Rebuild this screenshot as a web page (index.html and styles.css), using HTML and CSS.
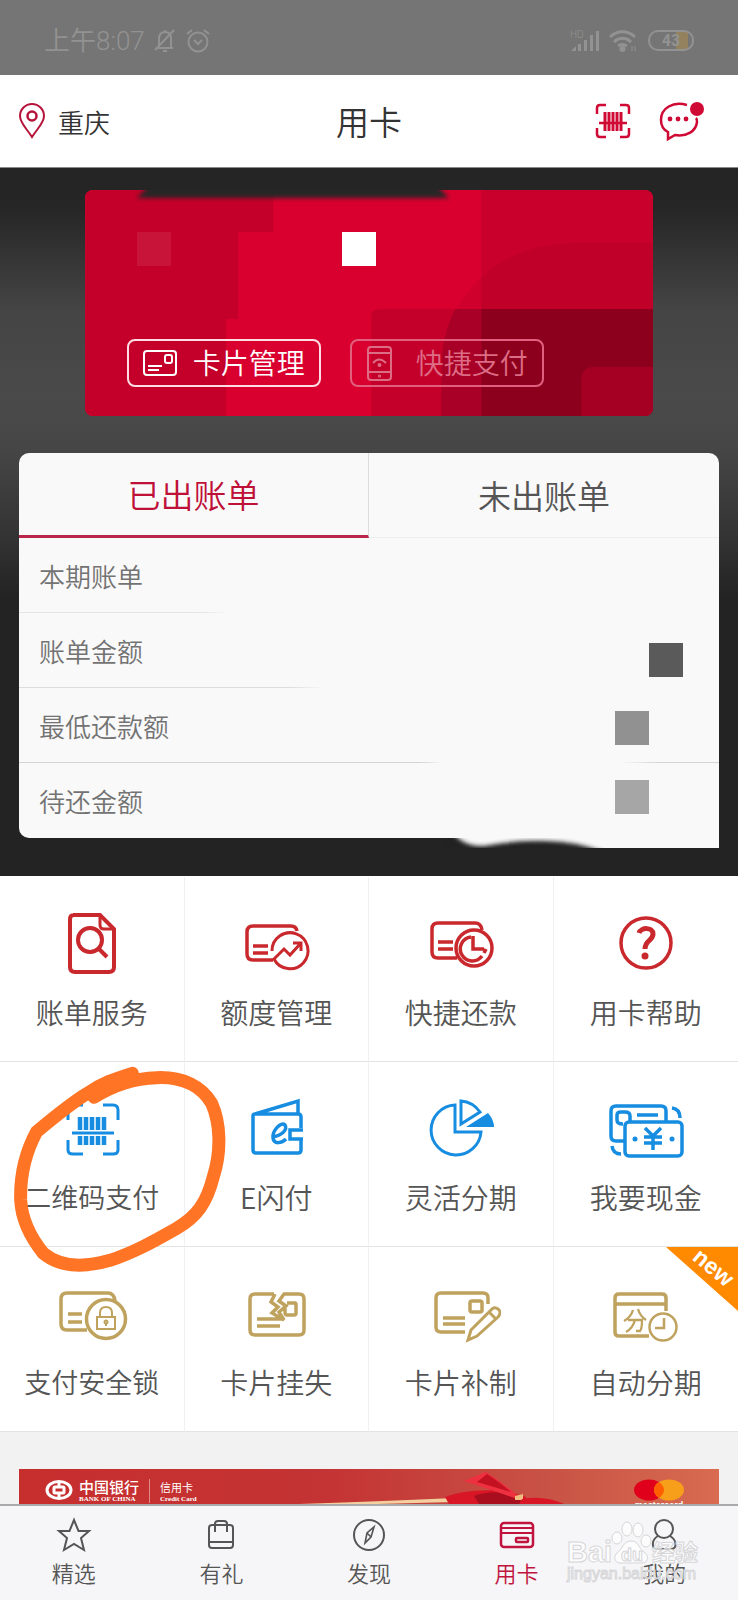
FILE: index.html
```html
<!DOCTYPE html>
<html lang="zh-CN">
<head>
<meta charset="utf-8">
<meta name="viewport" content="width=device-width, initial-scale=1">
<title>用卡</title>
<link rel="stylesheet" href="styles.css">
</head>
<body>
<div class="page">
  <div class="status">
    <span class="status-time">上午8:07</span>
    <svg class="ic" width="24" height="26" viewBox="0 0 24 26" stroke-width="2"><path d="M4 20H20M6 20V11C6 7 8 4 12 4S18 7 18 11V20M12 2V4M10 23H14M21 2 2 22"/></svg>
    <svg class="ic" width="26" height="26" viewBox="0 0 26 26" stroke-width="2"><circle cx="13" cy="14" r="9.5"/><path d="M9 12 13 16 17 12M2 6 7 2M24 6 19 2"/></svg>
    <span class="status-gap"></span>
    <svg class="signal" width="30" height="24" viewBox="0 0 30 24"><text class="hd" x="0" y="9">HD</text><path fill="currentColor" d="M1 22 6 17V22ZM8 15H11V22H8ZM14 11H17V22H14ZM20 6H23V22H20ZM26 2H29V22H26Z"/></svg>
    <svg class="ic wifi" width="30" height="24" viewBox="0 0 30 24" stroke-width="3"><path d="M2 8C9 1 20 1 27 8M6 13C11 8 18 8 23 13M10 17C13 15 16 15 19 17"/><circle cx="14.500" cy="20" r="1.500"/><path stroke-width="1" d="M24 17V22M27 17V22"/></svg>
    <span class="battery">43</span>
  </div>

  <header class="header">
    <button class="city" type="button">
      <svg class="ic" width="28" height="36" viewBox="0 0 28 36" stroke-width="2"><path d="M14 34C9 26 2 20 2 13A12 12 0 0 1 26 13C26 20 19 26 14 34Z"/><circle cx="14" cy="13" r="4.500" stroke-width="2.500"/></svg>
      <span>重庆</span>
    </button>
    <h1>用卡</h1>
    <div class="header-actions">
      <button type="button" aria-label="扫码">
        <svg class="ic" width="36" height="36" viewBox="0 0 36 36" stroke-width="2.500"><path d="M2 11V5Q2 2 5 2H11M25 2H31Q34 2 34 5V11M34 25V31Q34 34 31 34H25M11 34H5Q2 34 2 31V25M4 20H32"/><path d="M10 9V28M14 9V28M18 9V28M22 9V28M26 9V28" stroke-width="3"/></svg>
      </button>
      <button type="button" aria-label="消息">
        <svg class="ic" width="46" height="42" viewBox="0 0 46 42" stroke-width="2.500"><path d="M28 5C14 1 2 8 2 20C2 26 5 30 9 32V39L16 35C28 37 37 31 38 22C38 20 38 19 37 18"/><circle cx="38" cy="9" r="7" fill="currentColor" stroke="none"/><g fill="currentColor" stroke="none"><circle cx="11" cy="19" r="2.400"/><circle cx="19" cy="19" r="2.400"/><circle cx="27" cy="19" r="2.400"/></g></svg>
      </button>
    </div>
  </header>

  <main>
    <section class="account">
      <div class="card">
        <svg class="card-art" viewBox="0 0 568 226" preserveAspectRatio="none">
          <rect width="568" height="226" fill="#d9002f"/>
          <path fill="#c4002a" d="M0 0H188V42H153V129H141V226H0Z"/>
          <rect x="396" width="172" height="226" fill="#c9002c"/>
          <path fill="#8c001d" fill-opacity=".13" d="M356 226V180C358 108 410 53 490 53H568V226Z"/>
          <path fill="#c4002a" d="M286 226V127Q286 119 294 119H370Q356 145 356 180V226Z"/>
          <path fill="#a80026" d="M356 226V180Q356 145 370 119H396V226Z"/>
          <path fill="#8c001d" d="M396 119H568V226H396Z"/>
          <path fill="#a50024" d="M496 226V190Q496 177 509 177H568V226Z"/>
        </svg>
        <svg class="card-smear" viewBox="0 0 330 16"><path fill="#262626" d="M18 0H306L318 12H6Z"/></svg>
        <div class="card-marks"><span class="mark mark-faint"></span><span class="mark mark-white"></span></div>
        <div class="card-buttons">
          <button class="card-btn" type="button">
            <svg class="ic" width="34" height="28" viewBox="0 0 34 28" stroke-width="2"><rect x="1" y="2" width="32" height="24" rx="3"/><rect x="22" y="6" width="7" height="8" rx="2"/><path d="M5 17H19M5 21H16"/></svg>
            <span>卡片管理</span>
          </button>
          <button class="card-btn card-btn-dim" type="button">
            <svg class="ic" width="34" height="36" viewBox="0 0 34 36" stroke-width="2"><rect x="2" y="2" width="23" height="33" rx="3"/><path d="M2 8H25M2 27H25M7 18Q13 11 20 18"/><circle cx="13.500" cy="20" r="1"/><circle cx="13.500" cy="31" r=".6"/></svg>
            <span>快捷支付</span>
          </button>
        </div>
      </div>

      <div class="panel">
        <div class="tabs" role="tablist">
          <button class="tab tab-active" type="button" role="tab" aria-selected="true">已出账单</button>
          <button class="tab" type="button" role="tab" aria-selected="false">未出账单</button>
        </div>
        <dl class="bill">
          <div class="row row-a"><dt>本期账单</dt><dd></dd></div>
          <div class="row row-b"><dt>账单金额</dt><dd class="mark mark-dark"></dd></div>
          <div class="row row-c"><dt>最低还款额</dt><dd class="mark mark-mid"></dd></div>
          <div class="row row-d"><dt>待还金额</dt><dd class="mark mark-light"></dd></div>
        </dl>
        <svg class="panel-smear" width="275" height="10" viewBox="0 12 275 10">
          <defs><filter id="soft" x="-10%" y="-60%" width="120%" height="220%"><feGaussianBlur stdDeviation="2"/></filter></defs>
          <rect x="8" y="12" width="267" height="10" fill="#f9f9f9"/><path fill="#232323" filter="url(#soft)" d="M-30 6H8Q20 21 40 20Q70 14 102 15Q130 15 160 26V34H-30Z"/>
        </svg>
      </div>
    </section>

    <nav class="services" aria-label="服务">
      <a class="cell red" href="#"><svg class="ic" width="80" height="64" viewBox="0 0 80 64" stroke-width="4"><path d="M21 4H48L62 18V56Q62 61 57 61H23Q18 61 18 56V8Q18 4 22 4Z"/><path stroke-width="3" d="M48 4V14Q48 18 52 18H62"/><circle cx="38" cy="29" r="12"/><path d="M47 38 55 46"/></svg><span>账单服务</span></a>
      <a class="cell red" href="#"><svg class="ic" width="80" height="64" viewBox="0 0 80 64" stroke-width="3.500"><path d="M61 20Q60 15 55 15H17Q11 15 11 21V43Q11 49 17 49H37M17 35H32M17 42H32"/><path stroke-width="3" d="M36 40A18 18 0 1 1 38 48L48 38L54 44L65 32M57 32H65V40"/></svg><span>额度管理</span></a>
      <a class="cell red" href="#"><svg class="ic" width="80" height="64" viewBox="0 0 80 64" stroke-width="3.500"><path d="M61 19Q60 12 54 12H17Q11 12 11 18V41Q11 47 17 47H36M17 31H32M17 38H32"/><circle cx="53" cy="37" r="18"/><path d="M50 26A12 12 0 1 0 61 45M52 25V38H63M65 38 63 42"/></svg><span>快捷还款</span></a>
      <a class="cell red" href="#"><svg class="ic" width="80" height="64" viewBox="0 0 80 64" stroke-width="3.500"><circle cx="40" cy="32" r="25"/><path stroke-width="5" d="M33 22C35 16 47 16 47 23C47 30 39 29 39 38"/><circle cx="39" cy="45" r="3.500" fill="currentColor" stroke="none"/></svg><span>用卡帮助</span></a>

      <a class="cell blue five" href="#"><svg class="ic" width="80" height="64" viewBox="0 0 80 64" stroke-width="3"><path d="M16 24V14Q16 9 21 9H31M51 9H61Q66 9 66 14V24M66 44V54Q66 58 61 58H51M31 58H21Q16 58 16 54V44M20 37H62"/><path stroke-width="4.500" d="M28 21V34M28 40V49M34 21V34M34 40V49M40 21V34M40 40V49M46 21V34M46 40V49M52 21V34M52 40V49"/></svg><span>二维码支付</span>
        <svg class="ring" width="370" height="220" viewBox="0 0 1110 660"><path d="M282 112C340 75 400 55 470 53C550 50 605 80 635 130C662 190 664 275 640 350C620 430 590 470 530 505C460 545 400 578 330 601C250 624 180 622 130 580C90 530 65 480 62 420C60 340 80 270 110 215C170 165 220 125 262 100C310 68 340 58 397 40"/><path d="M275 98 330 66 400 45 340 78Z"/></svg></a>
      <a class="cell blue" href="#"><svg class="ic" width="80" height="64" viewBox="0 0 80 64" stroke-width="3.500"><path d="M65 32V21Q65 18 62 18H19Q17 18 17 20V54Q17 57 20 57H62Q65 57 65 54V43M19 18 62 5V18M67 34H54V43H67"/><path d="M36 41C45 40 52 34 49 29C45 25 36 35 37 42C38 49 46 47 50 43"/></svg><span>E闪付</span></a>
      <a class="cell blue" href="#"><svg class="ic" width="80" height="64" viewBox="0 0 80 64" stroke-width="3"><path d="M34 9A25 25 0 1 0 60 36H34ZM40 5V28L59 16Q52 6 40 5Z"/><path fill="currentColor" stroke="none" d="M45 31 67 17Q73 24 73 31Z"/></svg><span>灵活分期</span></a>
      <a class="cell blue" href="#"><svg class="ic" width="80" height="64" viewBox="0 0 80 64" stroke-width="3.500"><path d="M19 45H10Q5 45 5 40V15Q5 10 10 10H55Q60 10 60 15V25M31 19H52M17 28Q11 28 11 24V19Q11 16 15 16H19Q24 16 24 20V25"/><rect x="19" y="26" width="57" height="34" rx="4"/><path d="M39 32 47 40 55 32M47 40V54M38 41H56M38 47H56M66 12Q74 13 74 22M6 50Q7 58 15 58"/><g fill="currentColor" stroke="none"><circle cx="29" cy="43" r="2.500"/><circle cx="66" cy="43" r="2.500"/></g></svg><span>我要现金</span></a>

      <a class="cell gold five" href="#"><svg class="ic" width="80" height="64" viewBox="0 0 80 64" stroke-width="3.500"><path d="M63 20Q62 12 56 12H15Q9 12 9 18V43Q9 49 15 49H35M16 33H30M16 41H30"/><circle cx="54" cy="38" r="19.500"/><g stroke-width="2"><rect x="45" y="36" width="18" height="12"/><path d="M48 36V32Q48 26 54 26T60 32V36M54 42V45"/><circle cx="54" cy="41" r="1.500"/></g></svg><span>支付安全锁</span></a>
      <a class="cell gold" href="#"><svg class="ic" width="80" height="64" viewBox="0 0 80 64" stroke-width="3.500"><path d="M38 13H19Q14 13 14 18V49Q14 54 19 54H63Q68 54 68 49V18Q68 13 63 13H47M21 38H45M21 45H44M39 13 35 21 42 26 36 32 48 39 43 31 50 25 43 20 48 13M51 22H59Q60 22 60 24V32Q60 34 58 34H51Q49 34 49 31V27"/></svg><span>卡片挂失</span></a>
      <a class="cell gold" href="#"><svg class="ic" width="80" height="64" viewBox="0 0 80 64" stroke-width="3.500"><path d="M67 23V17Q67 12 62 12H20Q15 12 15 17V46Q15 51 20 51H44M22 37H44M22 43H44"/><rect x="49" y="20" width="12" height="11" rx="2"/><path stroke-width="3" d="M47 59 50 49 70 29Q73 25 77 28T77 36L56 55ZM68 31 75 38"/></svg><span>卡片补制</span></a>
      <a class="cell gold" href="#"><svg class="ic" width="80" height="64" viewBox="0 0 80 64" stroke-width="3.500"><path d="M60 30V17Q60 13 56 13H13Q9 13 9 17V51Q9 55 13 55H43M9 23H60"/><path stroke-width="2.300" d="M27 29Q25 36 18 40M32 28Q34 35 40 39M22 39H36Q36 48 34 50H30M29 39Q27 47 20 51"/><circle stroke-width="2.500" cx="57" cy="46" r="13.500"/><path stroke-width="2.500" d="M58 37V47H49"/></svg><span>自动分期</span>
        <svg class="new" width="72" height="64" viewBox="0 0 72 64"><path fill="#ff8a00" d="M0 0H72V64Z"/><text x="47" y="28" text-anchor="middle" transform="rotate(40 47 21)">new</text></svg></a>
    </nav>

    <section class="promo">
      <a class="banner" href="#">
        <svg class="boc" width="28" height="20" viewBox="0 0 28 20" fill="none" stroke="#fff" stroke-width="3"><ellipse cx="14" cy="10" rx="12" ry="8.500"/><rect x="9" y="7" width="10" height="6" rx="1"/><path d="M14 1V7M14 13V19"/></svg>
        <span class="brand"><b>中国银行</b><small>BANK OF CHINA</small></span>
        <span class="product"><b>信用卡</b><small>Credit Card</small></span>
        <svg class="ribbon" width="350" height="35" viewBox="0 0 350 35"><path fill="#f4cf9f" d="M0 35Q90 32 155 29V33L40 36Z"/><path fill="#d81626" d="M146 28Q165 20 205 21L227 28V35H150Z"/><path fill="#a80e1d" d="M175 27Q195 20 215 26L225 35H180Z"/><path fill="#ef3040" d="M165 12 187 3Q201 12 216 24L221 31Q190 20 165 12Z"/><path fill="#c41222" d="M178 13 188 5Q199 12 212 23Z"/><path fill="#f0bd80" d="M216 27 224 25V31H216Z"/><path fill="#d81626" d="M223 30Q245 26 265 35H220Z"/></svg>
        <span class="mc"><svg width="52" height="22" viewBox="0 0 52 22"><ellipse cx="16" cy="11" rx="15" ry="10.500" fill="#e0001b"/><ellipse cx="36" cy="11" rx="15" ry="10.500" fill="#f79e1b"/><path fill="#ff5f00" d="M26 3Q36 11 26 19Q16 11 26 3Z"/></svg><small>mastercard</small></span>
      </a>
    </section>
  </main>

  <nav class="tabbar" aria-label="主导航">
    <a href="#"><svg class="ic" width="36" height="36" viewBox="0 0 36 36" stroke-width="2"><path d="M18 3 22.500 14H33L25 21 28 33 18 27 8 33 11 21 3 14H13.500Z"/></svg><span>精选</span></a>
    <a href="#"><svg class="ic" width="36" height="36" viewBox="0 0 36 36" stroke-width="2"><rect x="6" y="8" width="24" height="23" rx="3"/><path d="M6 25H30M12 15V7Q12 4 15 4H21Q24 4 24 7V15"/></svg><span>有礼</span></a>
    <a href="#"><svg class="ic" width="36" height="36" viewBox="0 0 36 36" stroke-width="2"><circle cx="18" cy="18" r="15"/><path stroke-width="1.600" d="M23 10 20 20 14 26 16 16ZM16 16 20 20"/></svg><span>发现</span></a>
    <a class="current" href="#"><svg class="ic" width="36" height="36" viewBox="0 0 36 36" stroke-width="2.500"><rect x="2" y="6" width="32" height="24" rx="3"/><path stroke-width="2" d="M2 11H34M2 16H34"/><rect x="17" y="21" width="12" height="4" rx="1"/></svg><span>用卡</span></a>
    <a href="#"><svg class="ic" width="36" height="36" viewBox="0 0 36 36" stroke-width="2"><circle cx="18" cy="12" r="9"/><path d="M12 19C5 23 6 31 10 32H26C31 31 31 23 24 19"/></svg><span>我的</span></a>
    <svg class="watermark" width="136" height="70" viewBox="0 0 136 70">
      <text x="1" y="42" font-size="29" font-weight="700">Bai</text>
      <g><ellipse cx="51" cy="18" rx="5" ry="6"/><ellipse cx="61" cy="9" rx="5" ry="7"/><ellipse cx="72" cy="10" rx="5" ry="7"/><ellipse cx="80" cy="21" rx="5" ry="6"/><path d="M65 21C57 21 57 29 51 33C46 38 50 44 56 43H74C82 44 84 36 78 32C72 28 73 21 65 21Z"/></g>
      <text x="55" y="41" font-size="18" font-weight="700">du</text>
      <text x="86" y="41" font-size="23" font-weight="700">经验</text>
      <text x="1" y="59" font-size="16">jingyan.baidu.com</text>
    </svg>
  </nav>
</div>
</body>
</html>
```
FILE: styles.css
```css
* { box-sizing: border-box; }
body {
  margin: 0;
  background: #f2f2f2;
  color: #555;
  font-family: "Noto Sans CJK SC", "Liberation Sans", sans-serif;
  font-weight: 350;
}
button { border: 0; padding: 0; background: none; color: inherit; font: inherit; cursor: pointer; }
a { color: inherit; text-decoration: none; }
svg { display: block; flex: none; }
.ic { fill: none; stroke: currentColor; }
.page { display: flex; flex-direction: column; min-height: 100vh; }

.status {
  display: flex;
  align-items: center;
  gap: 8px;
  height: 75px;
  padding: 6px 44px 0;
  background: #757575;
  color: #929292;
}
.status-time { font-family: Roboto, "Noto Sans CJK SC", sans-serif; font-size: 26px; line-height: 32px; }
.status-gap { flex: 1; }
.signal { overflow: visible; }
.hd { font-family: Roboto, sans-serif; font-size: 10px; fill: currentColor; }
.wifi { margin-right: 2px; }
.battery {
  width: 46px;
  height: 21px;
  border: 2px solid #929292;
  border-radius: 10px;
  background: linear-gradient(90deg, transparent 26px, #94825f 26px, #94825f 38px, transparent 38px);
  font-family: Roboto, sans-serif;
  font-size: 16px;
  font-weight: 700;
  line-height: 17px;
  text-align: center;
}

.header {
  display: grid;
  grid-template-columns: 1fr auto 1fr;
  align-items: center;
  height: 93px;
  padding: 0 18px;
  background: #fff;
  border-bottom: 1px solid #888;
}
.header h1 { margin: 0; color: #333; font-size: 33px; font-weight: 350; line-height: 44px; }
.city { display: flex; align-items: center; gap: 12px; color: #b5133a; font-size: 26px; line-height: 36px; }
.city span { padding-top: 2px; color: #333; }
.header-actions { display: flex; justify-content: flex-end; align-items: center; gap: 28px; padding-right: 15px; color: #cf0a35; }

.account {
  padding: 22px 19px 38px;
  background: linear-gradient(#242424, #262626 40px, #444 140px, #4a4a4a 230px, #464646 280px, #333 370px, #232323 430px);
}
.card {
  position: relative;
  display: flex;
  flex-direction: column;
  justify-content: space-between;
  width: 81.200%;
  height: 226px;
  margin: 0 auto 37px;
  padding: 42px 42px 29px;
  border-radius: 8px;
  overflow: hidden;
}
.card-art { position: absolute; inset: 0; width: 100%; height: 100%; }
.card-smear { position: absolute; top: -4px; left: 46px; width: 330px; height: 16px; filter: blur(2px); }
.card-marks, .card-buttons { position: relative; display: flex; }
.card-marks { gap: 171px; padding-left: 10px; }
.card-buttons { gap: 29px; }
.mark { width: 34px; height: 34px; margin: 0; }
.mark-faint { background: #c91439; }
.mark-white { background: #fff; }
.mark-dark { background: #5a5a5a; }
.mark-mid { background: #919191; }
.mark-light { background: #a6a6a6; }
.card-btn {
  display: flex;
  align-items: center;
  justify-content: center;
  gap: 16px;
  width: 194px;
  height: 48px;
  border: 2px solid #ffdbe4;
  border-radius: 8px;
  color: #fff;
  font-size: 28px;
  line-height: 36px;
  white-space: nowrap;
}
.card-btn span { padding-bottom: 2px; }
.card-btn-dim { border-color: #e0607d; color: #dd6c85; }

.panel { position: relative; border-radius: 10px 10px 0 10px; background: #f9f9f9; }
.tabs { display: grid; grid-template-columns: 1fr 1fr; }
.tab {
  height: 85px;
  border-bottom: 1px solid #eee;
  color: #555;
  font-size: 33px;
  line-height: 44px;
}
.tab-active { border-right: 1px solid #ddd; border-bottom: 3px solid #b9264a; color: #bf1038; }
.bill { margin: 0; }
.row {
  display: flex;
  align-items: center;
  justify-content: space-between;
  height: 75px;
  padding: 0 70px 0 20px;
  background-position: bottom;
  background-repeat: no-repeat;
  background-size: 100% 1px;
}
.row dt { color: #737373; font-size: 26px; line-height: 36px; }
.row-a { background-image: linear-gradient(90deg, #e4e4e4 180px, transparent 210px); }
.row-b { padding-right: 36px; background-image: linear-gradient(90deg, #ddd 270px, transparent 306px); }
.row-b .mark { align-self: flex-end; margin-bottom: 11px; }
.row-c { background-image: linear-gradient(90deg, #d4d4d4 400px, transparent 425px, transparent 600px, #d4d4d4 640px); }
.row-c .mark { margin-top: 5px; }
.row-d .mark { margin-bottom: 7px; }
.panel-smear { position: absolute; right: 0; top: 100%; }

.services { display: grid; grid-template-columns: repeat(4, 1fr); padding-top: 1px; background: #fff; }
.cell {
  position: relative;
  display: flex;
  flex-direction: column;
  align-items: center;
  gap: 17px;
  height: 185px;
  padding-top: 34px;
  border-right: 1px solid #f0f0f0;
  border-bottom: 1px solid #e2e4e4;
  font-size: 28px;
  line-height: 40px;
  white-space: nowrap;
}
.cell:nth-child(4n) { border-right: 0; }
.cell span { color: #555; }
.cell.five { font-size: 27px; }
.red { color: #c9282d; }
.blue { color: #168de0; }
.gold { color: #bfa25e; }
.ring { position: absolute; z-index: 2; top: -2px; left: 0; pointer-events: none; }
.ring path { fill: none; stroke: #ff7425; stroke-width: 39; stroke-linecap: round; }
.new { position: absolute; top: 0; right: 0; }
.new text { fill: #fff; font-family: "Liberation Sans", sans-serif; font-size: 23px; font-weight: 700; }

.promo { padding: 37px 19px 0; }
.banner {
  position: relative;
  display: flex;
  align-items: flex-start;
  height: 35px;
  padding: 10px 34px 0 26px;
  background: linear-gradient(90deg, #c72e2e, #c43434 45%, #c85245 75%, #d86b50);
  color: #fff;
  overflow: hidden;
  white-space: nowrap;
}
.boc { margin-top: 1px; }
.brand, .product, .mc { display: flex; flex-direction: column; }
.brand { margin-left: 6px; padding-right: 10px; border-right: 1px solid #e08a8a; }
.brand b { font-size: 15px; line-height: 16px; font-weight: 500; }
.product { margin-left: 10px; }
.product b { font-size: 11px; line-height: 16px; font-weight: 400; }
.brand small, .product small { font-family: "Liberation Serif", serif; font-size: 7px; line-height: 8px; font-weight: 700; }
.ribbon { position: absolute; top: 0; left: 40%; }
.mc { position: relative; align-items: center; margin-left: auto; }
.mc small { font-family: "Liberation Sans", sans-serif; font-size: 9px; line-height: 8px; font-weight: 700; }

.tabbar {
  position: relative;
  display: flex;
  flex: 1;
  min-height: 96px;
  border-top: 2px solid #aaa;
  background: #f6f6f8;
}
.tabbar a {
  display: flex;
  flex: 1;
  flex-direction: column;
  align-items: center;
  gap: 4px;
  padding-top: 11px;
  font-size: 22px;
  line-height: 30px;
}
.tabbar .current { color: #c0143f; }
.watermark {
  position: absolute;
  right: 36px;
  top: 14px;
  pointer-events: none;
  fill: #fff;
  fill-opacity: .7;
  stroke: #d6d6d8;
  stroke-width: 1;
  font-family: "Liberation Sans", "Noto Sans CJK SC", sans-serif;
}
```
